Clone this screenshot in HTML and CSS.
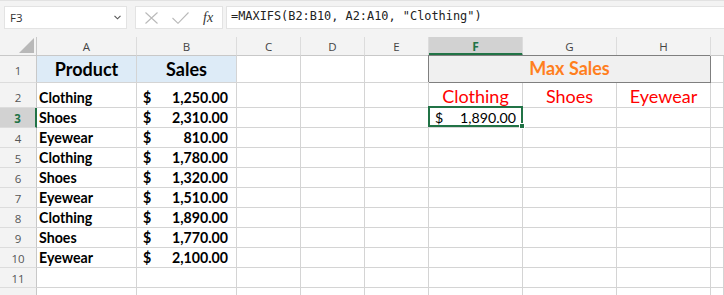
FILE: index.html
```html
<!DOCTYPE html>
<html>
<head>
<meta charset="utf-8">
<link rel="stylesheet" href="styles.css">
</head>
<body>
<div class="app">
  <div class="toolbar">
    <div class="namebox">
      <span class="name">F3</span>
      <svg class="chev" width="7" height="5" viewBox="0 0 7 5"><path d="M0.5 0.8 L3.5 3.8 L6.5 0.8" fill="none" stroke="#555" stroke-width="1.1"/></svg>
    </div>
    <div class="fxbox">
      <svg class="ico" width="13" height="12" viewBox="0 0 13 12"><path d="M0.5 0.5 L12.5 11.5 M12.5 0.5 L0.5 11.5" stroke="#b9b9b9" stroke-width="1.1" fill="none"/></svg>
      <svg class="ico" width="17" height="12" viewBox="0 0 17 12"><path d="M0.5 6 L6 11.3 L16.5 0.5" stroke="#b9b9b9" stroke-width="1.1" fill="none"/></svg>
      <span class="fx">fx</span>
    </div>
    <div class="formula">=MAXIFS(B2:B10, A2:A10, "Clothing")</div>
  </div>

  <div class="sheet">
    <div class="ch corner"><span class="tri"></span></div>
    <div class="ch">A</div><div class="ch">B</div><div class="ch">C</div><div class="ch">D</div><div class="ch">E</div><div class="ch sel">F</div><div class="ch">G</div><div class="ch">H</div><div class="ch last"></div>

    <div class="rh tall">1</div>
    <div class="c title">Product</div><div class="c title">Sales</div><div class="c"></div><div class="c"></div><div class="c"></div>
    <div class="c merged">Max Sales</div>
    <div class="c"></div>

    <div class="rh mid">2</div>
    <div class="c prod">Clothing</div><div class="c acct bold"><span>$</span><span>1,250.00</span></div><div class="c"></div><div class="c"></div><div class="c"></div>
    <div class="c red">Clothing</div><div class="c red">Shoes</div><div class="c red">Eyewear</div><div class="c"></div>

    <div class="rh rsel">3</div>
    <div class="c prod">Shoes</div><div class="c acct bold"><span>$</span><span>2,310.00</span></div><div class="c"></div><div class="c"></div><div class="c"></div>
    <div class="c acct active"><span>$</span><span>1,890.00</span><div class="selbox"><span class="handle"></span></div></div>
    <div class="c"></div><div class="c"></div><div class="c"></div>

    <div class="rh">4</div>
    <div class="c prod">Eyewear</div><div class="c acct bold"><span>$</span><span>810.00</span></div><div class="c"></div><div class="c"></div><div class="c"></div><div class="c"></div><div class="c"></div><div class="c"></div><div class="c"></div>
    <div class="rh">5</div>
    <div class="c prod">Clothing</div><div class="c acct bold"><span>$</span><span>1,780.00</span></div><div class="c"></div><div class="c"></div><div class="c"></div><div class="c"></div><div class="c"></div><div class="c"></div><div class="c"></div>
    <div class="rh">6</div>
    <div class="c prod">Shoes</div><div class="c acct bold"><span>$</span><span>1,320.00</span></div><div class="c"></div><div class="c"></div><div class="c"></div><div class="c"></div><div class="c"></div><div class="c"></div><div class="c"></div>
    <div class="rh">7</div>
    <div class="c prod">Eyewear</div><div class="c acct bold"><span>$</span><span>1,510.00</span></div><div class="c"></div><div class="c"></div><div class="c"></div><div class="c"></div><div class="c"></div><div class="c"></div><div class="c"></div>
    <div class="rh">8</div>
    <div class="c prod">Clothing</div><div class="c acct bold"><span>$</span><span>1,890.00</span></div><div class="c"></div><div class="c"></div><div class="c"></div><div class="c"></div><div class="c"></div><div class="c"></div><div class="c"></div>
    <div class="rh">9</div>
    <div class="c prod">Shoes</div><div class="c acct bold"><span>$</span><span>1,770.00</span></div><div class="c"></div><div class="c"></div><div class="c"></div><div class="c"></div><div class="c"></div><div class="c"></div><div class="c"></div>
    <div class="rh">10</div>
    <div class="c prod">Eyewear</div><div class="c acct bold"><span>$</span><span>2,100.00</span></div><div class="c"></div><div class="c"></div><div class="c"></div><div class="c"></div><div class="c"></div><div class="c"></div><div class="c"></div>
    <div class="rh">11</div>
    <div class="c"></div><div class="c"></div><div class="c"></div><div class="c"></div><div class="c"></div><div class="c"></div><div class="c"></div><div class="c"></div><div class="c"></div>
    <div class="rh">12</div>
    <div class="c"></div><div class="c"></div><div class="c"></div><div class="c"></div><div class="c"></div><div class="c"></div><div class="c"></div><div class="c"></div><div class="c"></div>
  </div>
</div>
</body>
</html>
```
FILE: styles.css
```css
* { box-sizing: border-box; }
html, body { margin: 0; padding: 0; }
body {
  width: 724px;
  height: 295px;
  overflow: hidden;
  background: #ffffff;
  font-family: "Lato", "Liberation Sans", sans-serif;
}
.app { width: 724px; height: 295px; overflow: hidden; background: #f3f3f3; }

.toolbar {
  height: 37px;
  display: flex;
  align-items: flex-start;
  padding: 5px 0 0 4px;
  border-top: 1px solid #e2e2e2;
}
.namebox {
  width: 123px;
  height: 23px;
  background: #fff;
  border: 1px solid #e3e3e3;
  display: flex;
  align-items: center;
  justify-content: space-between;
  padding: 0 4px 0 5px;
}
.name { font-family: "Open Sans", "Noto Sans", sans-serif; font-size: 11.5px; color: #333; }
.chev { margin-right: 1px; }
.fxbox {
  margin-left: 8px;
  width: 88px;
  height: 23px;
  background: #fff;
  border: 1px solid #e3e3e3;
  display: flex;
  align-items: center;
  padding: 0 0 0 9px;
  gap: 14px;
}
.ico { flex: none; }
.fx {
  font-family: "Liberation Serif", "DejaVu Serif", serif;
  font-style: italic;
  font-size: 14px;
  color: #333;
}
.formula {
  margin-left: 3px;
  flex: 1;
  height: 23px;
  background: #fff;
  border: 1px solid #e3e3e3;
  border-right: none;
  padding: 2px 0 0 4px;
  font-family: "DejaVu Sans Mono", "Liberation Mono", monospace;
  font-size: 11.9px;
  color: #222;
  white-space: pre;
}

.sheet {
  display: grid;
  grid-template-columns: 37px 100px 100px 64px 64px 64px 94px 94px 94px 1fr;
  grid-template-rows: 19px 27px 25px repeat(10, 20px);
  background: #fff;
}
.ch {
  background: #f3f3f3;
  border-right: 1px solid #dcdcdc;
  border-bottom: 1px solid #c8c8c8;
  font-family: "Open Sans", "Noto Sans", sans-serif;
  font-size: 11.5px;
  color: #444;
  display: flex;
  align-items: center;
  justify-content: center;
  padding-top: 1px;
}
.ch.corner { position: relative; border-right: 1px solid #c8c8c8; }
.tri {
  position: absolute;
  right: 2px;
  bottom: 2px;
  width: 0; height: 0;
  border-left: 15px solid transparent;
  border-bottom: 15px solid #b8b8b8;
}
.ch.last { border-right: none; }
.ch.sel {
  background: #d2d2d2;
  color: #217346;
  font-weight: 700;
  border-bottom: 3px solid #217346;
  padding-top: 3px;
  font-size: 12px;
}
.rh {
  background: #f3f3f3;
  border-right: 1px solid #c8c8c8;
  border-bottom: 1px solid #dcdcdc;
  font-family: "Open Sans", "Noto Sans", sans-serif;
  font-size: 11.5px;
  color: #555;
  display: flex;
  align-items: flex-end;
  justify-content: center;
  padding-bottom: 1px;
}
.rh.tall { padding-bottom: 4px; }
.rh.mid { padding-bottom: 2px; }
.rh.rsel {
  background: #d2d2d2;
  color: #217346;
  font-weight: 700;
  border-right: 2px solid #217346;
}
.c {
  border-right: 1px solid #d4d4d4;
  border-bottom: 1px solid #d4d4d4;
  font-size: 14.2px;
  color: #000;
  display: flex;
  align-items: flex-end;
  padding: 0 2px 1px 2px;
  white-space: nowrap;
}
.c.prod { font-weight: 700; padding-left: 2px; }
.c.bold { font-weight: 700; }
.c.title {
  background: #ddebf7;
  font-weight: 700;
  font-size: 18px;
  justify-content: center;
  padding-bottom: 2px;
}
.c.merged {
  grid-column: span 3;
  background: #f0f0f0;
  border-right: 1px solid #7f7f7f;
  border-bottom: 1px solid #7f7f7f;
  box-shadow: -1px -1px 0 #7f7f7f;
  color: #ff7f1e;
  font-weight: 700;
  font-size: 18px;
  justify-content: center;
  padding-bottom: 3px;
}
.c.red {
  color: #ff0000;
  font-size: 18px;
  justify-content: center;
  padding-bottom: 0;
}
.c.acct {
  justify-content: space-between;
  padding: 0 6px 1px 6px;
}
.c.acct.bold { padding: 0 8px 1px 6px; }
.active { position: relative; }
.selbox {
  position: absolute;
  left: -1px; top: -2px; right: -1px; bottom: 0;
  border: 2px solid #217346;
}
.handle {
  position: absolute;
  right: -4px;
  bottom: -4px;
  width: 6px; height: 6px;
  background: #217346;
  border: 1px solid #fff;
}
```
